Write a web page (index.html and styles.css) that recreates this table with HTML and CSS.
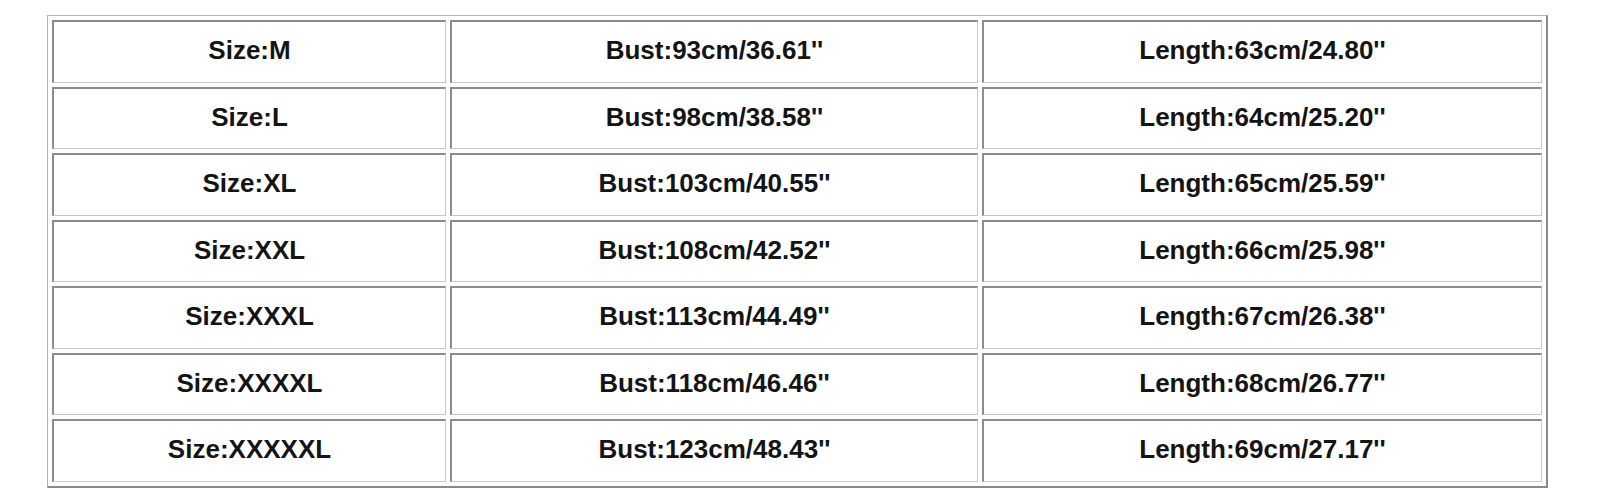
FILE: index.html
```html
<!DOCTYPE html>
<html>
<head>
<meta charset="utf-8">
<link rel="stylesheet" href="styles.css">
</head>
<body>
<table class="size-table">
  <colgroup>
    <col class="c1"><col class="c2"><col class="c3">
  </colgroup>
  <tr><td>Size:M</td><td>Bust:93cm/36.61''</td><td>Length:63cm/24.80''</td></tr>
  <tr><td>Size:L</td><td>Bust:98cm/38.58''</td><td>Length:64cm/25.20''</td></tr>
  <tr><td>Size:XL</td><td>Bust:103cm/40.55''</td><td>Length:65cm/25.59''</td></tr>
  <tr><td>Size:XXL</td><td>Bust:108cm/42.52''</td><td>Length:66cm/25.98''</td></tr>
  <tr><td>Size:XXXL</td><td>Bust:113cm/44.49''</td><td>Length:67cm/26.38''</td></tr>
  <tr><td>Size:XXXXL</td><td>Bust:118cm/46.46''</td><td>Length:68cm/26.77''</td></tr>
  <tr><td>Size:XXXXXL</td><td>Bust:123cm/48.43''</td><td>Length:69cm/27.17''</td></tr>
</table>
</body>
</html>
```

FILE: styles.css
```css
html, body {
  margin: 0;
  padding: 0;
  background: #ffffff;
}

body {
  padding: 15px 0 0 47px;
}

.size-table {
  width: 1501px;
  table-layout: fixed;
  border-collapse: separate;
  border-spacing: 4px;
  border-style: solid;
  border-width: 1px 2px 2px 1px;
  border-color: #b5b5b5 #8a8a8a #8a8a8a #b5b5b5;
  font-family: "Liberation Sans", Arial, sans-serif;
  font-weight: bold;
  font-size: 26px;
  color: #141414;
}

.c1 { width: 394px; }
.c2 { width: 528px; }
.c3 { width: 560px; }

.size-table td {
  box-sizing: border-box;
  height: 62.5px;
  padding: 0 0 2px 0;
  text-align: center;
  vertical-align: middle;
  border-style: solid;
  border-width: 2px 1px 1px 2px;
  border-color: #8c8c8c #c9c9c9 #c9c9c9 #8c8c8c;
}
```
